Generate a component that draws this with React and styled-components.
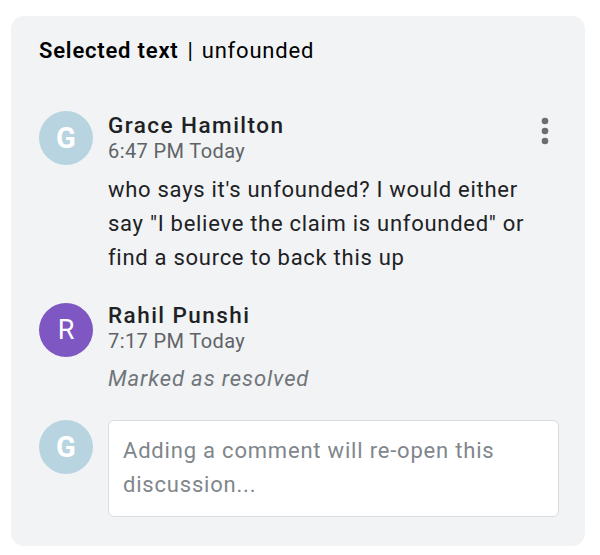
import styled, { createGlobalStyle } from 'styled-components';

const GlobalStyle = createGlobalStyle`
    body {
        margin: 0;
        background: #ffffff;
        font-family: Roboto, "Liberation Sans", sans-serif;
    }
`;

const Page = styled.div`
    padding: 16px 15px 9px 11px;
`;

const Card = styled.div`
    width: 574px;
    height: 530px;
    box-sizing: border-box;
    background-color: #f1f3f4;
    border-radius: 13px;
    padding: 21px 26px 0 28px;
    display: flex;
    flex-direction: column;
`;

const Header = styled.div`
    font-size: 22px;
    line-height: 28px;
    letter-spacing: 0.8px;
    color: #000000;
    display: flex;
    align-items: baseline;
`;

const HeaderLabel = styled.span`
    font-weight: 600;
`;

const Divider = styled.span`
    margin: 0 8px 0 9px;
    font-weight: 400;
`;

const Thread = styled.div`
    margin-top: 46px;
    display: flex;
    flex-direction: column;
`;

const Comment = styled.div`
    display: grid;
    grid-template-columns: 54px 1fr;
    column-gap: 15px;
    margin-top: ${(p) => p.$gap || 0}px;
`;

const Avatar = styled.div`
    width: 54px;
    height: 54px;
    border-radius: 50%;
    background-color: ${(p) => p.$color};
    color: #ffffff;
    display: flex;
    align-items: center;
    justify-content: center;
    font-size: ${(p) => (p.$bold ? 29 : 27)}px;
    font-weight: ${(p) => (p.$bold ? 700 : 400)};
    margin-top: ${(p) => p.$offset || 0}px;
`;

const Body = styled.div`
    min-width: 0;
`;

const TopRow = styled.div`
    display: flex;
    justify-content: space-between;
    align-items: flex-start;
`;

const Name = styled.div`
    font-size: 22.5px;
    line-height: 28px;
    font-weight: 500;
    letter-spacing: 1.45px;
    color: #202124;
`;

const Time = styled.div`
    font-size: 20px;
    line-height: 24px;
    letter-spacing: 0.4px;
    color: #5f6368;
`;

const Text = styled.div`
    margin-top: 10px;
    font-size: 22px;
    line-height: 34px;
    letter-spacing: 0.72px;
    color: #202124;
`;

const Resolved = styled.div`
    margin-top: 12px;
    font-size: 22px;
    line-height: 28px;
    letter-spacing: 0.9px;
    font-style: italic;
    color: #70757a;
`;

const MoreButton = styled.button`
    border: none;
    background: none;
    padding: 0;
    margin: 6px 2px 0 0;
    width: 24px;
    height: 28px;
    display: flex;
    align-items: center;
    justify-content: center;
    cursor: pointer;
`;

const Reply = styled.textarea`
    width: 100%;
    height: 97px;
    box-sizing: border-box;
    border: 1px solid #dadce0;
    border-radius: 6px;
    background: #ffffff;
    padding: 13px 14px;
    font-family: Roboto, "Liberation Sans", sans-serif;
    font-size: 22px;
    line-height: 34px;
    letter-spacing: 0.8px;
    color: #202124;
    resize: none;
    outline: none;
    display: block;
    &::placeholder {
        color: #80868b;
    }
`;

const MoreIcon = () => (
    <svg width="8" height="28" viewBox="0 0 8 28">
        <circle cx="4" cy="4" r="3.3" fill="#6b6e72" />
        <circle cx="4" cy="14" r="3.3" fill="#6b6e72" />
        <circle cx="4" cy="24" r="3.3" fill="#6b6e72" />
    </svg>
);

const App = () => {
    return (
        <>
            <GlobalStyle />
            <Page>
                <Card>
                    <Header>
                        <HeaderLabel>Selected text</HeaderLabel>
                        <Divider>|</Divider>
                        <span>unfounded</span>
                    </Header>
                    <Thread>
                        <Comment>
                            <Avatar $color="#b7d4e0" $bold>G</Avatar>
                            <Body>
                                <TopRow>
                                    <div>
                                        <Name>Grace Hamilton</Name>
                                        <Time>6:47 PM Today</Time>
                                    </div>
                                    <MoreButton aria-label="More options">
                                        <MoreIcon />
                                    </MoreButton>
                                </TopRow>
                                <Text>
                                    who says it's unfounded? I would either say "I believe the claim is
                                    unfounded" or find a source to back this up
                                </Text>
                            </Body>
                        </Comment>
                        <Comment $gap={26}>
                            <Avatar $color="#7e57c2" $offset={2}>R</Avatar>
                            <Body>
                                <Name>Rahil Punshi</Name>
                                <Time>7:17 PM Today</Time>
                                <Resolved>Marked as resolved</Resolved>
                            </Body>
                        </Comment>
                        <Comment $gap={27}>
                            <Avatar $color="#b7d4e0" $bold>G</Avatar>
                            <Reply placeholder="Adding a comment will re-open this discussion..." />
                        </Comment>
                    </Thread>
                </Card>
            </Page>
        </>
    );
};

export default App;
